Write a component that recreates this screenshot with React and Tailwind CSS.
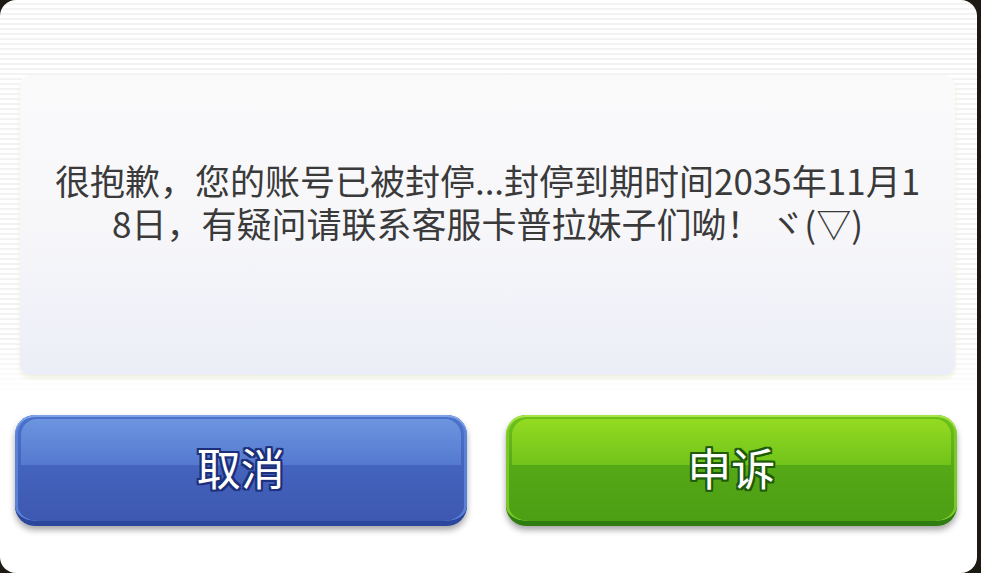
const cjk = { fontFamily: '"Noto Sans CJK SC", "Noto Sans", sans-serif' }

function GlossButton({ label, tone }) {
  const blue = tone === 'blue'
  return (
    <button
      className={
        'relative h-[111px] flex-1 overflow-hidden rounded-[20px] border-b-[5px] ' +
        (blue
          ? 'border-[#2b479c] bg-gradient-to-b from-[#4a72cd] via-[#4463bd] to-[#3d58b0] shadow-[0_4px_6px_rgba(0,0,0,0.35),inset_0_2px_0_#7fa3e6,inset_3px_0_0_#5b82d6,inset_-3px_0_0_#5b82d6]'
          : 'border-[#2f7d10] bg-gradient-to-b from-[#6fc11a] via-[#55a816] to-[#4c9e14] shadow-[0_4px_6px_rgba(0,0,0,0.35),inset_0_2px_0_#a8e64a,inset_3px_0_0_#7cc82a,inset_-3px_0_0_#7cc82a]')
      }
    >
      {/* upper gloss band */}
      <span
        className={
          'absolute inset-x-[6px] top-[4px] h-[46px] rounded-t-[16px] ' +
          (blue
            ? 'bg-gradient-to-b from-[#6c95df] to-[#5479cf]'
            : 'bg-gradient-to-b from-[#94da22] to-[#71c31a]')
        }
      />
      <span
        className="relative text-[44px] leading-none text-white"
        style={{
          ...cjk,
          textShadow: blue
            ? '2px 0 #1d2f7a, -2px 0 #1d2f7a, 0 2px #1d2f7a, 0 -2px #1d2f7a, 2px 2px #1d2f7a, -2px -2px #1d2f7a, 2px -2px #1d2f7a, -2px 2px #1d2f7a'
            : '2px 0 #1e5a0a, -2px 0 #1e5a0a, 0 2px #1e5a0a, 0 -2px #1e5a0a, 2px 2px #1e5a0a, -2px -2px #1e5a0a, 2px -2px #1e5a0a, -2px 2px #1e5a0a',
        }}
      >
        {label}
      </span>
    </button>
  )
}

export default function App() {
  return (
    <div className="h-[573px] w-[981px] overflow-hidden bg-[#1c1a12]">
      <div className="flex h-[573px] w-[977px] flex-col rounded-[16px] bg-white bg-[linear-gradient(180deg,rgba(255,255,255,0)_0px,rgba(255,255,255,0)_340px,#ffffff_400px),repeating-linear-gradient(180deg,#ffffff_0px,#ffffff_3px,#f3f3f3_3px,#f3f3f3_5px)]">
        {/* message box */}
        <div className="ml-[20px] mr-[22px] mt-[75px] h-[300px] rounded-[10px] bg-gradient-to-b from-[#fafafb] via-[#f7f7fa] to-[#eceef7] pt-[83px] text-center text-[35px] leading-[43px] text-[#3a3a3a] shadow-[0_3px_4px_rgba(230,230,200,0.6)]" style={cjk}>
          很抱歉，您的账号已被封停...封停到期时间2035年11月1
          <br />
          8日，有疑问请联系客服卡普拉妹子们呦！ ヾ(▽)
        </div>

        {/* actions */}
        <div className="ml-[15px] mr-[20px] mt-[40px] flex gap-[39px]">
          <GlossButton label="取消" tone="blue" />
          <GlossButton label="申诉" tone="green" />
        </div>
      </div>
    </div>
  )
}
